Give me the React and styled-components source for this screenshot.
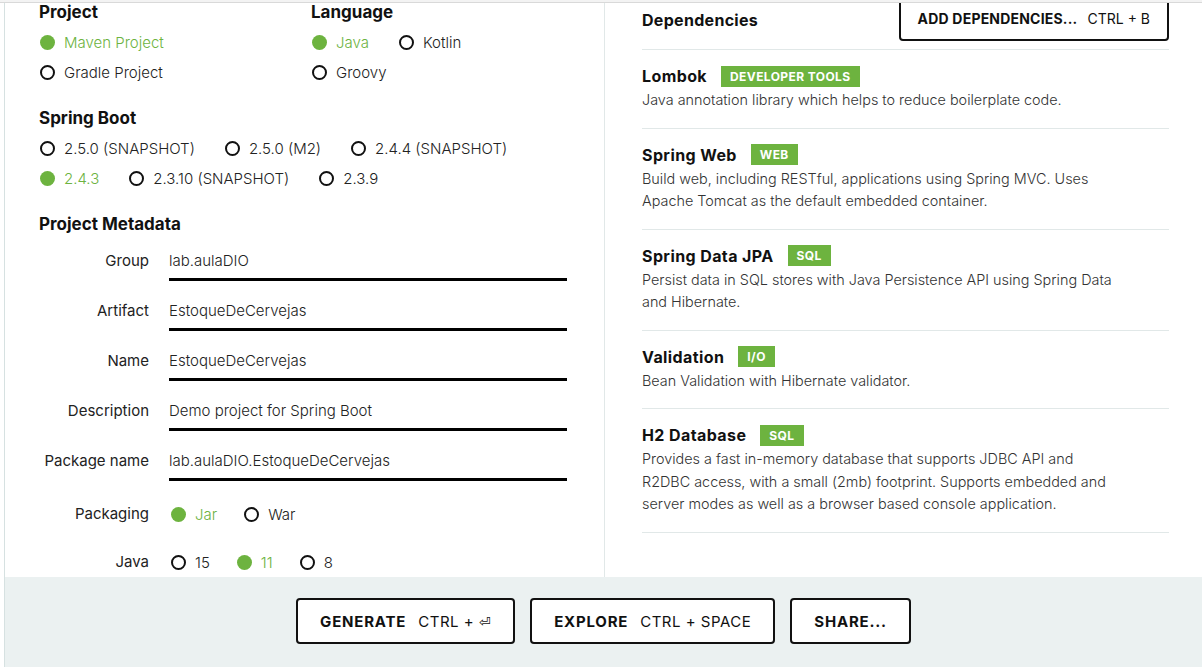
import React from "react";
import styled, { createGlobalStyle } from "styled-components";

const GlobalStyle = createGlobalStyle`
  html, body {
    margin: 0;
    padding: 0;
    background: #fff;
  }
  body {
    font-family: Inter, Lato, sans-serif;
    color: #222;
  }
`;

const green = "#6db33f";
const line = "#e1e8e8";

const projectRows = [
  [{ label: "Maven Project", on: true }],
  [{ label: "Gradle Project" }],
];

const languageRows = [
  [{ label: "Java", on: true }, { label: "Kotlin" }],
  [{ label: "Groovy" }],
];

const bootRows = [
  [{ label: "2.5.0 (SNAPSHOT)" }, { label: "2.5.0 (M2)" }, { label: "2.4.4 (SNAPSHOT)" }],
  [{ label: "2.4.3", on: true }, { label: "2.3.10 (SNAPSHOT)" }, { label: "2.3.9" }],
];

const metadata = [
  { label: "Group", value: "lab.aulaDIO" },
  { label: "Artifact", value: "EstoqueDeCervejas" },
  { label: "Name", value: "EstoqueDeCervejas" },
  { label: "Description", value: "Demo project for Spring Boot" },
  { label: "Package name", value: "lab.aulaDIO.EstoqueDeCervejas" },
];

const dependencies = [
  {
    name: "Lombok",
    tag: "Developer Tools",
    lines: ["Java annotation library which helps to reduce boilerplate code."],
  },
  {
    name: "Spring Web",
    tag: "Web",
    lines: [
      "Build web, including RESTful, applications using Spring MVC. Uses",
      "Apache Tomcat as the default embedded container.",
    ],
  },
  {
    name: "Spring Data JPA",
    tag: "SQL",
    lines: [
      "Persist data in SQL stores with Java Persistence API using Spring Data",
      "and Hibernate.",
    ],
  },
  {
    name: "Validation",
    tag: "I/O",
    lines: ["Bean Validation with Hibernate validator."],
  },
  {
    name: "H2 Database",
    tag: "SQL",
    lines: [
      "Provides a fast in-memory database that supports JDBC API and",
      "R2DBC access, with a small (2mb) footprint. Supports embedded and",
      "server modes as well as a browser based console application.",
    ],
  },
];

function RadioRows({ rows }) {
  return rows.map((row, i) => (
    <RadioRow key={i}>
      {row.map((item) => (
        <RadioItem key={item.label} $on={item.on}>
          <Dot $on={item.on} />
          {item.label}
        </RadioItem>
      ))}
    </RadioRow>
  ));
}

export default function App() {
  return (
    <>
      <GlobalStyle />
      <Page>
        <TopShade />
        <Shell>
          <Main>
            <LeftCol>
              <TwoCols>
                <Section>
                  <Heading>Project</Heading>
                  <RadioRows rows={projectRows} />
                </Section>
                <Section>
                  <Heading>Language</Heading>
                  <RadioRows rows={languageRows} />
                </Section>
              </TwoCols>
              <Section>
                <Heading>Spring Boot</Heading>
                <RadioRows rows={bootRows} />
              </Section>
              <Section>
                <Heading>Project Metadata</Heading>
                <MetaList>
                  {metadata.map((m) => (
                    <MetaRow key={m.label}>
                      <MetaLabel>{m.label}</MetaLabel>
                      <MetaInput>{m.value}</MetaInput>
                    </MetaRow>
                  ))}
                  <MetaRow>
                    <MetaLabel $radio>Packaging</MetaLabel>
                    <InlineRadios $gap={26}>
                      <RadioRows rows={[[{ label: "Jar", on: true }, { label: "War" }]]} />
                    </InlineRadios>
                  </MetaRow>
                  <MetaRow>
                    <MetaLabel $radio>Java</MetaLabel>
                    <InlineRadios $gap={26}>
                      <RadioRows rows={[[{ label: "15" }, { label: "11", on: true }, { label: "8" }]]} />
                    </InlineRadios>
                  </MetaRow>
                </MetaList>
              </Section>
            </LeftCol>

            <RightCol>
              <DepHeader>
                <DepHeading>Dependencies</DepHeading>
                <OutlineButton $wide>
                  <strong>ADD DEPENDENCIES...</strong>
                  <Hint $plain>CTRL + B</Hint>
                </OutlineButton>
              </DepHeader>
              {dependencies.map((d) => (
                <DepItem key={d.name}>
                  <DepTitle>
                    {d.name}
                    <Badge>{d.tag}</Badge>
                  </DepTitle>
                  <DepDesc>
                    {d.lines.map((l) => (
                      <div key={l}>{l}</div>
                    ))}
                  </DepDesc>
                </DepItem>
              ))}
            </RightCol>
          </Main>

          <Footer>
            <OutlineButton>
              <strong>GENERATE</strong>
              <Hint>CTRL + <Enter>⏎</Enter></Hint>
            </OutlineButton>
            <OutlineButton>
              <strong>EXPLORE</strong>
              <Hint>CTRL + SPACE</Hint>
            </OutlineButton>
            <OutlineButton>
              <strong>SHARE...</strong>
            </OutlineButton>
          </Footer>
        </Shell>
      </Page>
    </>
  );
}

const Page = styled.div`
  position: relative;
  height: 667px;
  overflow: hidden;
  padding-left: 4px;
  display: flex;
  flex-direction: column;
  box-sizing: border-box;
`;

const TopShade = styled.div`
  position: absolute;
  top: 0;
  left: 0;
  right: 0;
  height: 2px;
  background: #f3f3f3;
  border-bottom: 1px solid #d9d9d9;
  z-index: 3;
`;

const Shell = styled.div`
  flex: 1;
  min-height: 0;
  display: flex;
  flex-direction: column;
  border-left: 1px solid #d6e1e1;
`;

const Main = styled.div`
  flex: 1;
  min-height: 0;
  display: grid;
  grid-template-columns: 600px 1fr;
  overflow: hidden;
`;

const LeftCol = styled.div`
  border-right: 1px solid ${line};
  padding-left: 34px;
`;

const RightCol = styled.div`
  padding: 0 33px 0 37px;
`;

const TwoCols = styled.div`
  display: grid;
  grid-template-columns: 272px 1fr;
`;

const Section = styled.section`
  margin-bottom: 19px;
`;

const Heading = styled.h2`
  margin: 0 0 3px;
  font-size: 17px;
  line-height: 24px;
  font-weight: 700;
  color: #111;
`;

const RadioRow = styled.div`
  display: flex;
  align-items: center;
  height: 30px;
`;

const RadioItem = styled.div`
  display: flex;
  align-items: center;
  margin-right: 29px;
  font-size: 15px;
  font-weight: 300;
  color: ${(p) => (p.$on ? green : "#222")};
  white-space: nowrap;
`;

const Dot = styled.span`
  box-sizing: border-box;
  width: 15px;
  height: 15px;
  margin: 0 9px 0 1px;
  border-radius: 50%;
  border: ${(p) => (p.$on ? "none" : "2px solid #111")};
  background: ${(p) => (p.$on ? green : "#fff")};
`;

const MetaList = styled.div`
  margin-top: 13px;
  display: flex;
  flex-direction: column;
  gap: 18px;
`;

const MetaRow = styled.div`
  display: grid;
  grid-template-columns: 110px 398px;
  column-gap: 20px;
  align-items: start;
`;

const MetaLabel = styled.div`
  text-align: right;
  font-size: 15px;
  line-height: ${(p) => (p.$radio ? "30px" : "24px")};
  color: #222;
`;

const MetaInput = styled.div`
  font-size: 15px;
  font-weight: 300;
  line-height: 24px;
  padding-bottom: 5px;
  border-bottom: 3px solid #000;
  color: #222;
`;

const InlineRadios = styled.div`
  margin-left: 1px;

  ${RadioItem} {
    margin-right: ${(p) => p.$gap}px;
  }
`;

const DepHeader = styled.div`
  margin-top: -5px;
  padding-bottom: 8px;
  display: flex;
  align-items: center;
  justify-content: space-between;
  border-bottom: 1px solid ${line};
`;

const DepHeading = styled.h2`
  margin: 0;
  padding-top: 3px;
  font-size: 16px;
  font-weight: 700;
  letter-spacing: 0.3px;
  color: #111;
`;

const OutlineButton = styled.button`
  box-sizing: border-box;
  height: 46px;
  display: inline-flex;
  align-items: center;
  padding: 0 ${(p) => (p.$wide ? "17px" : "22px")};
  background: #fff;
  border: 2px solid #111;
  border-radius: 4px;
  font-family: inherit;
  font-size: ${(p) => (p.$wide ? "14px" : "15px")};
  color: #111;
  white-space: nowrap;
  cursor: pointer;

  strong {
    font-weight: 700;
    letter-spacing: ${(p) => (p.$wide ? "0.2px" : "0.8px")};
  }
`;

const Hint = styled.span`
  margin-left: ${(p) => (p.$plain ? "10px" : "12px")};
  font-weight: 400;
  letter-spacing: ${(p) => (p.$plain ? "0" : "0.5px")};
`;

const Enter = styled.span`
  font-family: "DejaVu Sans", sans-serif;
  font-size: 14px;
`;

const DepItem = styled.div`
  padding: 14px 0 16px;
  border-bottom: 1px solid ${line};
`;

const DepTitle = styled.div`
  display: flex;
  align-items: center;
  font-size: 16px;
  line-height: 24px;
  font-weight: 700;
  letter-spacing: 0.4px;
  color: #111;
`;

const Badge = styled.span`
  margin-left: 14px;
  padding: 0 9px;
  height: 21px;
  line-height: 21px;
  background: ${green};
  color: #fff;
  font-size: 12px;
  font-weight: 700;
  letter-spacing: 0.4px;
  text-transform: uppercase;
`;

const DepDesc = styled.div`
  margin-top: 1px;
  font-size: 14.4px;
  font-weight: 300;
  line-height: 22.5px;
  color: #333;
`;

const Footer = styled.footer`
  height: 90px;
  flex-shrink: 0;
  box-sizing: border-box;
  padding-top: 21px;
  background: #ebf1f1;
  display: flex;
  justify-content: center;
  align-items: flex-start;
  gap: 15px;
`;
